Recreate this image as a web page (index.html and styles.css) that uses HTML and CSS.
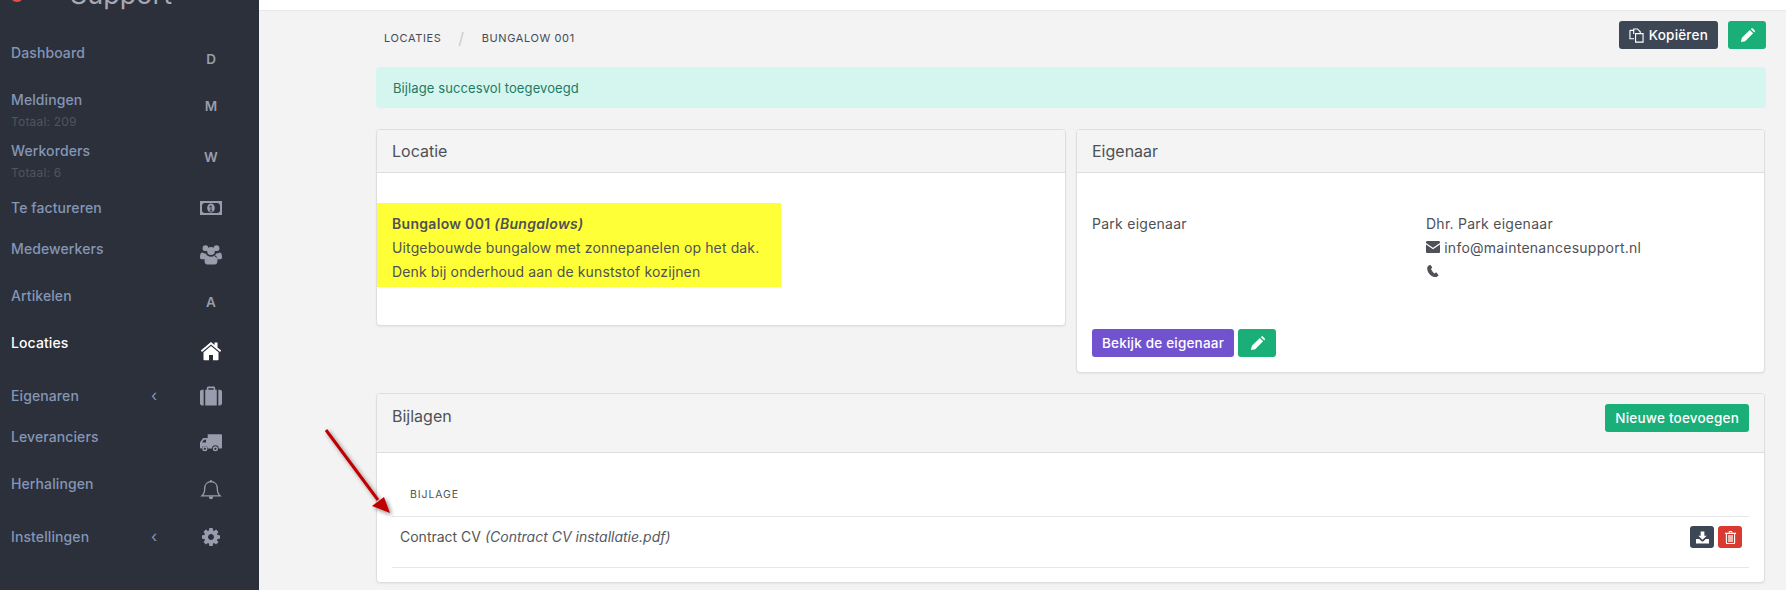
FILE: index.html
```html
<!DOCTYPE html>
<html lang="nl">
<head>
<meta charset="utf-8">
<title>Bungalow 001</title>
<link rel="stylesheet" href="styles.css">
</head>
<body>
<aside class="sidebar">
  <div class="logo"><span class="logo-dot"></span><span class="logo-text">Support</span></div>
  <nav class="nav">
    <a class="row h47"><span class="label">Dashboard</span><span class="icon low letter">D</span></a>
    <a class="row h51"><span class="label">Meldingen<small>Totaal: 209</small></span><span class="icon low letter">M</span></a>
    <a class="row h57"><span class="label">Werkorders<small>Totaal: 6</small></span><span class="icon low letter">W</span></a>
    <a class="row h41"><span class="label">Te factureren</span><span class="icon"><svg class="i22" viewBox="0 0 22 14"><path fill-rule="evenodd" d="M0 0h22v14H0zM3.500 2a1.500 1.500 0 0 1-1.500 1.500v7a1.500 1.500 0 0 1 1.500 1.500h15a1.500 1.500 0 0 1 1.500-1.500v-7a1.500 1.500 0 0 1-1.500-1.500zM11 2.500c2.200 0 3.800 2 3.800 4.500s-1.600 4.500-3.800 4.500-3.800-2-3.800-4.500 1.600-4.500 3.800-4.500zM9.500 9.500v1h3v-1h-1V4.500h-1l-1.300 1.200.6.700.7-.6v3.700z"/></svg></span></a>
    <a class="row h47"><span class="label">Medewerkers</span><span class="icon low"><svg class="i22" viewBox="0 0 22 20"><circle cx="5.500" cy="3.200" r="2.900"/><circle cx="16.500" cy="3.200" r="2.900"/><circle cx="11" cy="6" r="3.900"/><path d="M0 12c0-3 1-4.500 2.500-4.500 1 .9 2.200 1.200 3.500 1 .2 1.100.8 2 1.600 2.700C5.800 12 4.800 13 4.300 14.300H1.500C.6 14.300 0 13.300 0 12zM22 12c0-3-1-4.500-2.500-4.500-1 .9-2.200 1.200-3.500 1-.2 1.100-.8 2-1.600 2.700 1.800.8 2.800 1.800 3.300 3.100h2.800c.9 0 1.500-1 1.500-2.300zM7.500 10.500c2 1.700 5 1.700 7 0 2 0 3 1.800 3 5 0 2.500-1 4-2.800 4H7.300c-1.800 0-2.800-1.500-2.800-4 0-3.200 1-5 3-5z"/></svg></span></a>
    <a class="row h47"><span class="label">Artikelen</span><span class="icon low letter">A</span></a>
    <a class="row h53 active"><span class="label">Locaties</span><span class="icon lower"><svg class="i22" viewBox="0 0 22 19"><path d="M11 4.500 3.500 10.800V18c0 .5.300.8.800.8h4.700v-5.300h4V18.800h4.700c.5 0 .8-.3.800-.8v-7.200z"/><path d="M11 .5.800 9l1.200 1.400L11 3l9 7.400L21.200 9l-3.700-3.100V1h-3v2.400z"/></svg></span></a>
    <a class="row h41"><span class="label">Eigenaren</span><span class="chev">‹</span><span class="icon"><svg class="i22" viewBox="0 0 21 18"><path fill-rule="evenodd" d="M6.500 3V1.500C6.500.6 7.100 0 8 0h5c.9 0 1.500.6 1.500 1.500V3h1.500v15H5V3zM8 3h5V1.500H8zM0 5c0-1.200.8-2 2-2h1.500v15H2c-1.200 0-2-.8-2-2zM17.500 3H19c1.200 0 2 .8 2 2v11c0 1.200-.8 2-2 2h-1.500z"/></svg></span></a>
    <a class="row h47"><span class="label">Leveranciers</span><span class="icon low"><svg class="i22" viewBox="0 0 20 16"><path fill-rule="evenodd" d="M7 0h12c.6 0 1 .4 1 1v11c0 .6-.4 1-1 1h-2a3 3 0 0 0-6 0H7.300a3 3 0 0 0-5.800 0H1c-.6 0-1-.4-1-1V7.500L2.800 3.500H7zM5.500 5H3.600L1.800 7.500h3.700zM4.400 11a2.300 2.300 0 1 1 0 4.600 2.300 2.300 0 0 1 0-4.600zm0 1.300a1 1 0 1 0 0 2 1 1 0 0 0 0-2zM14 11a2.300 2.300 0 1 1 0 4.600 2.300 2.300 0 0 1 0-4.600zm0 1.300a1 1 0 1 0 0 2 1 1 0 0 0 0-2z"/></svg></span></a>
    <a class="row h53"><span class="label">Herhalingen</span><span class="icon low"><svg class="i22" viewBox="0 0 20 20"><path class="outline" d="M1 15.800c2-1.700 2.700-4 2.700-7.300C3.700 4.500 6.300 1.700 10 1.700s6.300 2.800 6.300 6.800c0 3.300.7 5.600 2.700 7.300z"/><path d="M7.800 16.500h4.400c0 1.700-1 2.800-2.200 2.800s-2.200-1.100-2.200-2.800zM9 .2h2v2H9z"/></svg></span></a>
    <a class="row h47"><span class="label">Instellingen</span><span class="chev">‹</span><span class="icon"><svg class="i18" viewBox="0 0 1536 1536"><path d="M1024 768q0-106-75-181t-181-75-181 75-75 181 75 181 181 75 181-75 75-181zm512-109v222q0 12-8 23t-20 13l-185 28q-19 54-39 91 35 50 107 138 10 12 10 25t-9 23q-27 37-99 108t-94 71q-12 0-26-9l-138-108q-44 23-91 38-16 136-29 186-7 28-36 28H657q-14 0-24.500-8.500T621 1506l-28-184q-49-16-90-37l-141 107q-10 9-25 9-14 0-25-11-126-114-165-168-7-10-7-23 0-12 8-23 15-21 51-66.500t54-70.500q-27-50-41-99L29 913q-13-2-21-12.500T0 877V655q0-12 8-23t19-13l186-28q14-46 39-92-40-57-107-138-10-12-10-24 0-10 9-23 26-36 98.500-107.500T337 135q13 0 26 10l138 107q44-23 91-38 16-136 29-186 7-28 36-28h222q14 0 24.500 8.500T915 30l28 184q49 16 90 37l142-107q9-9 24-9 13 0 25 10 129 119 165 170 7 8 7 22 0 12-8 23-15 21-51 66.500t-54 70.500q26 50 41 98l183 28q13 2 21 12.500t8 23.500z"/></svg></span></a>
  </nav>
</aside>

<div class="main">
  <header class="topbar"></header>
  <main class="content">
    <div class="crumbbar">
      <ol class="crumbs">
        <li>Locaties</li>
        <li class="sep">/</li>
        <li>Bungalow 001</li>
      </ol>
      <div class="actions">
        <button class="btn dark">
          <svg class="bi" viewBox="0 0 16 16"><path class="outline-w" d="M5 6.500V1h4l3 3v1.500M1 2.500h4v4M1 2.500v9h4.500M7 6h8v9H7z"/></svg>
          Kopiëren
        </button>
        <button class="btn green square"><svg class="bi" viewBox="0 0 16 16"><path d="M1 15l1-4.500L10.500 2l3.500 3.500L5.500 14zM11.500 1l.8-.5c.5-.3 1-.3 1.400.1l2 2c.4.400.4.900.1 1.300l-.6.900z"/></svg></button>
      </div>
    </div>

    <div class="alert">Bijlage succesvol toegevoegd</div>

    <div class="cards">
      <section class="card">
        <h2 class="card-head">Locatie</h2>
        <div class="loc-body">
          <div class="highlight">
            <strong>Bungalow 001 <em>(Bungalows)</em></strong><br>
            Uitgebouwde bungalow met zonnepanelen op het dak.<br>
            Denk bij onderhoud aan de kunststof kozijnen
          </div>
        </div>
      </section>

      <section class="card">
        <h2 class="card-head">Eigenaar</h2>
        <div class="own-body">
          <div class="own-cols">
            <div>Park eigenaar</div>
            <div>
              Dhr. Park eigenaar<br>
              <svg class="ci" viewBox="0 0 14 12"><path d="M0 1.300C0 .6.600 0 1.300 0h11.400c.7 0 1.300.6 1.300 1.300v.8L7 6.800 0 2.100zM0 3.500l7 4.700 7-4.700v7.200c0 .7-.6 1.300-1.300 1.300H1.300C.6 12 0 11.400 0 10.700z"/></svg> info@maintenancesupport.nl<br>
              <svg class="ci" viewBox="0 0 12 12"><path d="M2.800 0 1 1C-.5 3 .2 6 2 8.500s4.500 4 7.500 3.500l1.800-1.200c.3-.2.300-.6.100-.9L9.700 7.700c-.2-.3-.6-.3-.9-.1L7.500 8.400C6.500 7.800 5.500 6.800 4.800 5.500L4 4l1-1.200c.2-.3.200-.6 0-.8L3.700.2C3.400-.1 3.100-.1 2.800 0z"/></svg>
            </div>
          </div>
          <div class="own-btns">
            <button class="btn purple">Bekijk de eigenaar</button>
            <button class="btn green square"><svg class="bi" viewBox="0 0 16 16"><path d="M1 15l1-4.500L10.500 2l3.500 3.500L5.500 14zM11.500 1l.8-.5c.5-.3 1-.3 1.400.1l2 2c.4.400.4.900.1 1.300l-.6.900z"/></svg></button>
          </div>
        </div>
      </section>
    </div>

    <section class="card attach">
      <div class="card-head attach-head">
        <h2 class="attach-title">Bijlagen</h2>
        <button class="btn green">Nieuwe toevoegen</button>
      </div>
      <div class="attach-body">
        <div class="th">Bijlage</div>
        <div class="tr">
          <span>Contract CV <em class="file">(Contract CV installatie.pdf)</em></span>
          <span class="tr-btns">
            <button class="mini dark"><svg class="mi" viewBox="0 0 14 13"><path d="M5 0h4v4.500h2.500L7 9 2.500 4.500H5z"/><path d="M0 8h3.500L6 10.500c.6.500 1.400.500 2 0L10.500 8H14v5H0z"/></svg></button>
            <button class="mini red"><svg class="mi" viewBox="0 0 12 14"><path fill-rule="evenodd" d="M4 1c0-.6.400-1 1-1h2c.6 0 1 .4 1 1v1h4v1.200h-1V13c0 .6-.4 1-1 1H2c-.6 0-1-.4-1-1V3.200H0V2h4zM5 1v1h2V1zM2.200 3.200v9.600h7.600V3.200z"/><path class="stripe" d="M3.300 4.200h5.400v7.600H3.300z"/></svg></button>
          </span>
        </div>
      </div>
    </section>
  </main>
</div>

<svg class="arrow" viewBox="0 0 90 100" aria-hidden="true">
  <defs><filter id="as" x="-30%" y="-30%" width="170%" height="170%"><feDropShadow dx="2" dy="2" stdDeviation="2" flood-color="#000" flood-opacity=".45"/></filter></defs>
  <g filter="url(#as)"><path d="M6 5 58 75" stroke="#c00000" stroke-width="3" fill="none"/><path d="M70 88 52 81 64 72z" fill="#c00000"/></g>
</svg>
</body>
</html>
```
FILE: styles.css
```css
* { box-sizing: border-box; }
html, body { margin: 0; height: 590px; overflow: hidden; }
body {
  display: flex;
  font-family: Inter, "Liberation Sans", sans-serif;
  font-size: 14px;
  line-height: 24px;
  color: #4e5157;
  background: #f3f3f3;
}
button { font-family: inherit; border: 0; cursor: pointer; }

/* sidebar */
.sidebar { width: 259px; flex: none; height: 590px; background: #2c303b; overflow: hidden; }
.logo { height: 40px; margin-top: -25px; padding-left: 10px; display: flex; align-items: center; }
.logo-dot { width: 14px; height: 14px; border-radius: 50%; background: #e0504f; }
.logo-text { margin-left: 46px; font-size: 27px; color: #a6a9b2; line-height: 30px; }
.nav { display: flex; flex-direction: column; padding-top: 26px; }
.row { display: grid; grid-template-columns: 1fr 47px 26px; padding: 0 35px 0 11px; align-items: start; color: #8496b5; }
.row.h41 { height: 41px; }
.row.h47 { height: 47px; }
.row.h51 { height: 51px; }
.row.h53 { height: 53px; }
.row.h57 { height: 57px; }
.row.active { color: #fff; font-weight: 600; }
.label { grid-column: 1; font-size: 14px; line-height: 24px; letter-spacing: .1px; font-weight: 500; }
.label small { display: block; font-size: 12px; line-height: 20px; color: #50545f; font-weight: 400; letter-spacing: .2px; }
.chev { grid-column: 2; font-size: 16px; line-height: 22px; color: #8496b5; }
.icon { grid-column: 3; width: 26px; height: 24px; display: flex; align-items: center; justify-content: center; color: #989dad; fill: currentColor; }
.active .icon { color: #fff; }
.icon.low { margin-top: 6px; }
.icon.lower { margin-top: 8px; }
.letter { font-size: 13.5px; font-weight: 600; }
.i22 { width: 22px; height: 20px; fill: currentColor; }
.i18 { width: 18px; height: 18px; fill: currentColor; }
.outline { fill: none; stroke: currentColor; stroke-width: 1.300; }

/* main */
.main { flex: 1; min-width: 0; display: flex; flex-direction: column; }
.topbar { height: 11px; flex: none; background: #fff; border-bottom: 1px solid #e8e8e8; }
.content { padding: 10px 20px 0 117px; display: flex; flex-direction: column; }
.crumbbar { display: flex; justify-content: space-between; align-items: center; height: 28px; margin-bottom: 18px; }
.crumbs { list-style: none; margin: 5px 0 0; padding: 0 0 0 8px; display: flex; text-transform: uppercase; font-size: 11px; letter-spacing: .6px; color: #454a55; }
.sep { margin: 0 17px; color: #ccc; font-size: 16px; }
.actions { display: flex; gap: 10px; }
.btn { display: inline-flex; align-items: center; justify-content: center; gap: 5px; height: 28px; padding: 0 10px; border-radius: 3px; font-size: 13.5px; font-weight: 500; letter-spacing: .2px; color: #fff; }
.btn.square { width: 38px; padding: 0; }
.dark { background: #3c4655; }
.green { background: #1aae79; }
.purple { background: #7153d0; }
.red { background: #d93a30; }
.bi { width: 15px; height: 15px; fill: #fff; }
.outline-w { fill: none; stroke: #fff; stroke-width: 1.200; }
.alert { height: 41px; padding: 0 17px; margin-bottom: 21px; display: flex; align-items: center; border-radius: 4px; background: #d5f6ef; color: #1e7a66; font-size: 13px; letter-spacing: .1px; }

.cards { display: grid; grid-template-columns: 690px 689px; gap: 10px; align-items: start; margin-bottom: 20px; }
.card { background: #fff; border: 1px solid #dedede; border-radius: 4px; box-shadow: 0 1px 2px rgba(0,0,0,.06); overflow: hidden; }
.card-head { margin: 0; height: 43px; padding: 0 15px; display: flex; align-items: center; background: #f4f4f4; border-bottom: 1px solid #dedede; font-size: 16px; font-weight: 400; color: #4e5157; }
.loc-body { height: 152px; padding-top: 30px; }
.highlight { width: 404px; height: 84px; padding: 9px 15px 0; background: #ffff38; letter-spacing: .13px; }
.highlight strong { font-weight: 600; letter-spacing: .3px; }
.own-body { height: 199px; padding: 30px 15px 0; letter-spacing: .26px; }
.own-cols { display: grid; grid-template-columns: 334px 1fr; height: 126px; }
.own-cols > div { padding-top: 9px; }
.ci { width: 14px; height: 12px; fill: #4e5157; }
.own-btns { display: flex; gap: 4px; }

.attach { width: 1389px; }
.attach-head { height: 59px; align-items: flex-start; justify-content: space-between; padding-top: 10px; }
.attach-title { margin: 0; font-size: 16px; font-weight: 400; line-height: 24px; }
.attach-body { padding: 0 15px; height: 129px; }
.th { height: 64px; padding: 30px 18px 0; font-size: 10.5px; letter-spacing: .9px; text-transform: uppercase; line-height: 24px; color: #4e5157; border-bottom: 1px solid #e6e6e6; }
.tr { height: 51px; display: flex; justify-content: space-between; padding: 8px 7px 0 8px; border-bottom: 1px solid #e6e6e6; color: #555; }
.file { color: #555a66; }
.tr-btns { display: flex; gap: 4px; padding-top: 1px; }
.mini { width: 24px; height: 22px; padding: 0; border-radius: 3px; display: flex; align-items: center; justify-content: center; }
.mi { width: 13px; height: 13px; fill: #fff; }
.stripe { fill: #f0b8b4; }

.arrow { position: absolute; left: 320px; top: 425px; width: 90px; height: 100px; overflow: visible; }
```
